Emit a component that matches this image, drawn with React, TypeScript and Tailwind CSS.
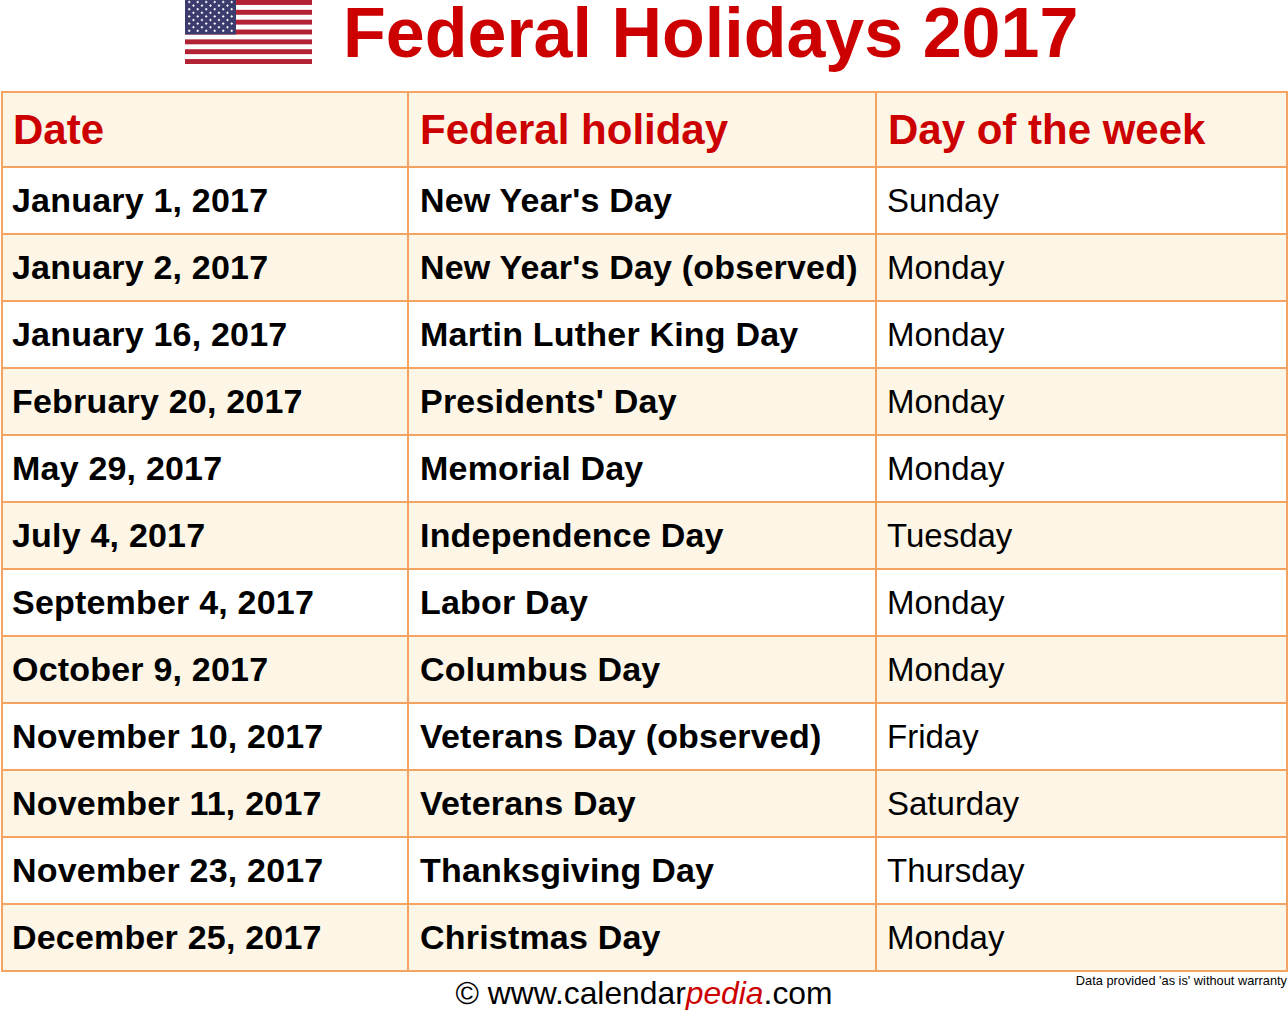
import React from "react";

const holidays: { date: string; name: string; day: string }[] = [
  { date: "January 1, 2017", name: "New Year's Day", day: "Sunday" },
  { date: "January 2, 2017", name: "New Year's Day (observed)", day: "Monday" },
  { date: "January 16, 2017", name: "Martin Luther King Day", day: "Monday" },
  { date: "February 20, 2017", name: "Presidents' Day", day: "Monday" },
  { date: "May 29, 2017", name: "Memorial Day", day: "Monday" },
  { date: "July 4, 2017", name: "Independence Day", day: "Tuesday" },
  { date: "September 4, 2017", name: "Labor Day", day: "Monday" },
  { date: "October 9, 2017", name: "Columbus Day", day: "Monday" },
  { date: "November 10, 2017", name: "Veterans Day (observed)", day: "Friday" },
  { date: "November 11, 2017", name: "Veterans Day", day: "Saturday" },
  { date: "November 23, 2017", name: "Thanksgiving Day", day: "Thursday" },
  { date: "December 25, 2017", name: "Christmas Day", day: "Monday" },
];

function Flag() {
  const stripe = 64 / 13;
  const stars: { x: number; y: number }[] = [];
  for (let r = 0; r < 9; r++) {
    const count = r % 2 === 0 ? 6 : 5;
    for (let c = 0; c < count; c++) {
      const x = r % 2 === 0 ? 4.2 + c * 8.5 : 8.45 + c * 8.5;
      stars.push({ x, y: 2 + r * 3.6 });
    }
  }
  return (
    <svg width="127" height="64" viewBox="0 0 127 64" className="shrink-0">
      <rect width="127" height="64" fill="#ffffff" />
      {Array.from({ length: 7 }).map((_, i) => (
        <rect key={i} x="0" y={i * 2 * stripe} width="127" height={stripe} fill="#b22234" />
      ))}
      <rect x="0" y="0" width="51" height={stripe * 7} fill="#3c3b6e" />
      {stars.map((s, i) => (
        <g key={i} fill="#ffffff">
          <rect x={s.x - 1.2} y={s.y - 0.5} width="2.4" height="1" />
          <rect x={s.x - 0.5} y={s.y - 1.2} width="1" height="2.4" />
        </g>
      ))}
    </svg>
  );
}

export default function App() {
  return (
    <div className="w-[1288px] h-[1010px] bg-white overflow-hidden font-['Liberation_Sans',Arial,sans-serif]">
      <div className="h-[91px] flex items-start pl-[185px] gap-[31px]">
        <Flag />
        <h1 className="text-[70px] leading-[66px] font-bold text-[#cc0000]">Federal Holidays 2017</h1>
      </div>

      <div className="ml-px grid grid-cols-[406px_468px_411px] border-t-2 border-l-2 border-[#f4a460]">
        {["Date", "Federal holiday", "Day of the week"].map((h, i) => (
          <div
            key={h}
            className={`h-[75px] flex items-center ${i === 0 ? "pl-[10px]" : "pl-[11px]"} bg-[#fdf5e6] border-r-2 border-b-2 border-[#f4a460] text-[42px] font-bold text-[#cc0000]`}
          >
            {h}
          </div>
        ))}
        {holidays.map((row, i) => {
          const bg = i % 2 === 1 ? "bg-[#fdf5e6]" : "bg-white";
          return (
            <React.Fragment key={row.date}>
              <div className={`h-[67px] flex items-center pl-[9px] border-r-2 border-b-2 border-[#f4a460] text-[34px] tracking-[0.2px] font-bold text-black ${bg}`}>
                {row.date}
              </div>
              <div className={`h-[67px] flex items-center pl-[11px] border-r-2 border-b-2 border-[#f4a460] text-[34px] tracking-[0.2px] font-bold text-black ${bg}`}>
                {row.name}
              </div>
              <div className={`h-[67px] flex items-center pl-[10px] border-r-2 border-b-2 border-[#f4a460] text-[33px] text-black ${bg}`}>
                {row.day}
              </div>
            </React.Fragment>
          );
        })}
      </div>

      <div className="grid grid-cols-[1fr_auto_1fr]">
        <div />
        <div className="pt-[6px] text-[31.8px] leading-none text-black">
          © www.calendar<span className="italic text-[#cc0000]">pedia</span>.com
        </div>
        <div className="pt-[3px] pr-px text-right text-[12.8px] leading-none text-black">
          Data provided 'as is' without warranty
        </div>
      </div>
    </div>
  );
}
